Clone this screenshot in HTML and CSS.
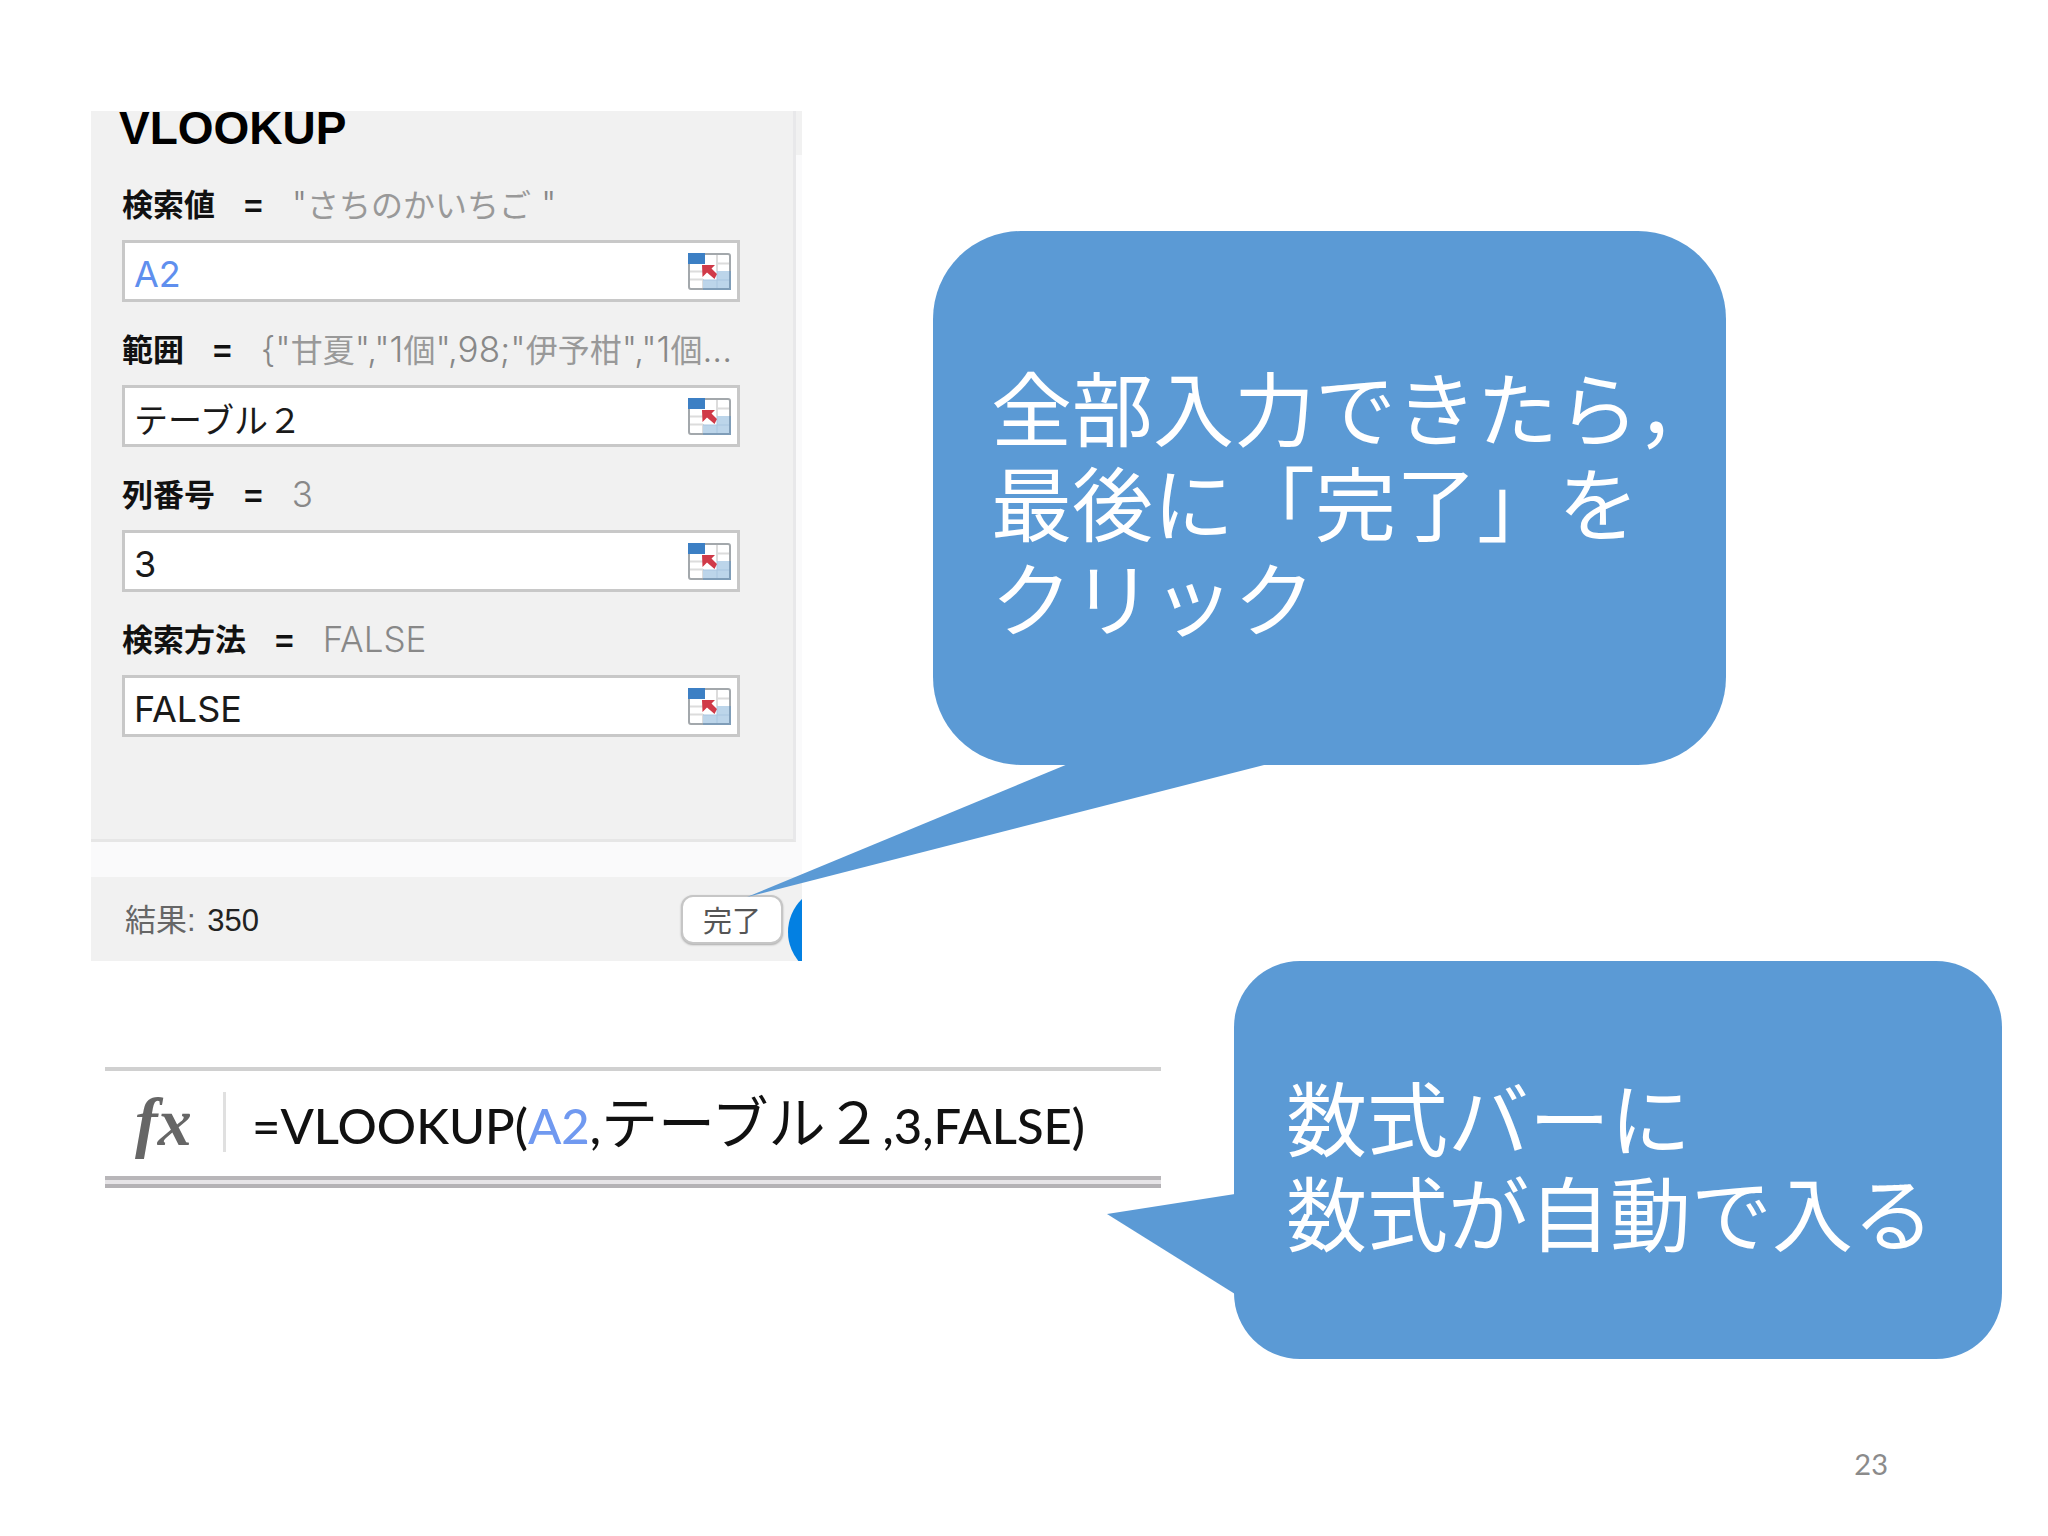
FILE: index.html
```html
<!DOCTYPE html>
<html lang="ja">
<head>
<meta charset="utf-8">
<meta name="viewport" content="width=device-width, initial-scale=1">
<title>VLOOKUP</title>
<link rel="stylesheet" href="styles.css">
</head>
<body>
<svg class="defs" width="0" height="0" aria-hidden="true">
  <symbol id="pick" viewBox="0 0 43 37">
    <rect x="1" y="1" width="41" height="35" rx="2" fill="#fff" stroke="#a3a8ac" stroke-width="2"/>
    <path d="M2 18.500H15M2 26.500H15M29 10.500H41M29 2V18M15 26V35" stroke="#dcdcdc" stroke-width="2" fill="none"/>
    <path d="M29 18H42V36H15V27H29Z" fill="#bcd5ea"/>
    <path d="M29 18V35M15 27H41" stroke="#a9c6e0" stroke-width="1" fill="none"/>
    <path d="M42 18V36H15" stroke="#7f9db8" stroke-width="2" fill="none"/>
    <rect width="17" height="11" fill="#3c7fc4"/>
    <path d="M14 12H27L23.500 15.500L29 21L26.500 26L19 19.500L14.500 24Z" fill="#d03a48"/>
  </symbol>
</svg>
<main class="slide">
  <section class="row row-dialog">
    <form class="panel">
      <div class="args">
        <h1 class="title">VLOOKUP</h1>
        <div class="field">
          <div class="caption"><label for="f1">検索値</label><b class="eq">=</b><span class="preview"><i>"</i>さちのかいちご<i> "</i></span></div>
          <div class="box"><input id="f1" class="ref" value="A2"><button type="button" class="pick" aria-label="検索値を選択"><svg><use href="#pick"/></svg></button></div>
        </div>
        <div class="field">
          <div class="caption"><label for="f2">範囲</label><b class="eq">=</b><span class="preview"><i>{"</i>甘夏<i>","1</i>個<i>",98;"</i>伊予柑<i>","1</i>個<i>...</i></span></div>
          <div class="box"><input id="f2" class="kana" value="テーブル２"><button type="button" class="pick" aria-label="範囲を選択"><svg><use href="#pick"/></svg></button></div>
        </div>
        <div class="field">
          <div class="caption"><label for="f3">列番号</label><b class="eq">=</b><span class="preview"><i>3</i></span></div>
          <div class="box"><input id="f3" value="3"><button type="button" class="pick" aria-label="列番号を選択"><svg><use href="#pick"/></svg></button></div>
        </div>
        <div class="field">
          <div class="caption"><label for="f4">検索方法</label><b class="eq">=</b><span class="preview"><i>FALSE</i></span></div>
          <div class="box"><input id="f4" value="FALSE"><button type="button" class="pick" aria-label="検索方法を選択"><svg><use href="#pick"/></svg></button></div>
        </div>
      </div>
      <div class="result">
        <p>結果: <output>350</output></p>
        <button type="button" class="done">完了</button>
        <span class="dot"></span>
      </div>
    </form>
    <div class="callout callout-done">
      <svg class="tail" viewBox="0 0 521 133" aria-hidden="true"><path d="M0 133L321 0H521Z"/></svg>
      <p>全部入力できたら，<br>最後に「完了」を<br>クリック</p>
    </div>
  </section>
  <section class="row row-formula">
    <div class="formula">
      <span class="fx">fx</span>
      <p class="code">=VLOOKUP(<span class="cell">A2</span>,<span class="name">テーブル２</span>,3,FALSE)</p>
    </div>
    <div class="callout callout-bar">
      <svg class="tail" viewBox="0 0 128 100" aria-hidden="true"><path d="M0 20L128 0V100Z"/></svg>
      <p>数式バーに<br>数式が自動で入る</p>
    </div>
  </section>
  <footer class="page">23</footer>
</main>
</body>
</html>
```
FILE: styles.css
```css
* { box-sizing: border-box; }

body {
  margin: 0;
  background: #fff;
  color: #111;
  font-family: "Liberation Sans", "Noto Sans CJK JP", sans-serif;
}

p, h1 { margin: 0; }

.defs { position: absolute; }

.slide { padding-top: 111px; overflow: hidden; }

.row { display: grid; align-items: start; }

.row-dialog { grid-template-columns: 91fr 711fr 131fr 793fr 322fr; }

.row-formula { grid-template-columns: 105fr 1056fr 73fr 768fr 46fr; }

/* Function arguments panel */
.panel {
  grid-column: 2;
  overflow: hidden;
  background: #fafafb;
}

.args {
  padding: 0 53px 102px 31px;
  border-right: 3px solid #e8e8ea;
  border-bottom: 3px solid #e6e6e6;
  margin-right: 6px;
  background: #f1f1f1;
  box-shadow: 6px -687px 0 #f1f1f1;
}

.title {
  margin: 0 0 37px -3px;
  font-size: 46px;
  line-height: 34px;
  color: #000;
}

.field + .field { margin-top: 25px; }

.caption {
  display: flex;
  gap: 29px;
  height: 46px;
  margin-bottom: 12px;
  font-size: 31px;
  line-height: 48px;
  white-space: nowrap;
}

.caption label { font-weight: 700; }

.eq { font-size: 32px; }

.preview {
  color: #999;
  font-weight: 400;
  font-size: 32px;
}

.preview i {
  font-style: normal;
  font-weight: 300;
  color: #888;
  font-family: Inter, sans-serif;
  font-size: 35px;
  line-height: 40px;
}

.box {
  display: flex;
  align-items: center;
  height: 62px;
  padding-right: 6px;
  border: 3px solid #c8c8c8;
  background: #fff;
}

.box input {
  flex: 1;
  min-width: 0;
  height: 56px;
  padding: 6px 0 0 9px;
  border: 0;
  background: none;
  color: #1a1a1a;
  font: 36px/48px Inter, "Noto Sans CJK JP", sans-serif;
}

.box .kana {
  padding-top: 4px;
  font-size: 34px;
}

.box .ref { color: #5f8fee; }

.pick {
  width: 43px;
  height: 37px;
  padding: 0;
  border: 0;
  background: none;
}

.pick svg { display: block; width: 43px; height: 37px; }

.result {
  position: relative;
  display: flex;
  justify-content: space-between;
  align-items: center;
  height: 84px;
  margin-top: 35px;
  padding: 0 19px 0 34px;
  background: #f1f1f1;
  color: #666;
  font-size: 31px;
}

.result p { padding-bottom: 4px; }

.result output { margin-left: 3px; color: #222; }

.done {
  width: 102px;
  height: 49px;
  padding: 0;
  border: 2px solid #c6c6c6;
  border-radius: 12px;
  background: #fff;
  box-shadow: 0 1px 2px #aaa;
  color: #555;
  font: 29px/40px "Noto Sans CJK JP", sans-serif;
}

.dot {
  position: absolute;
  top: 9px;
  right: -78px;
  width: 92px;
  height: 92px;
  border-radius: 50%;
  background: #0380e2;
}

/* Speech bubbles */
.callout {
  grid-column: 4;
  position: relative;
  display: flex;
  align-items: center;
  background: #5b9ad5;
  color: #fff;
  font: 81px/95px "Noto Sans CJK JP", sans-serif;
  white-space: nowrap;
}

.callout-done {
  height: 534px;
  margin-top: 120px;
  padding: 2px 0 0 58px;
  border-radius: 88px;
}

.callout-bar {
  height: 398px;
  padding: 4px 0 0 52px;
  border-radius: 66px;
}

.tail { position: absolute; fill: #5b9ad5; }

.callout-done .tail {
  top: 533px;
  right: 458px;
  width: 521px;
  height: 133px;
}

.callout-bar .tail {
  top: 233px;
  right: calc(100% - 1px);
  width: 128px;
  height: 100px;
}

/* Formula bar */
.formula {
  grid-column: 2;
  display: flex;
  align-items: center;
  height: 113px;
  margin-top: 106px;
  padding-bottom: 3px;
  border-top: 4px solid #d0d0d0;
  border-bottom: 4px solid #b8b6b9;
  box-shadow: 0 4px 0 #e6e4e7, 0 8px 0 #b4b2b5;
  white-space: nowrap;
}

.fx {
  width: 121px;
  padding-left: 30px;
  border-right: 3px solid #e0e0e0;
  color: #666;
  font: italic 700 68px/60px "Liberation Serif", serif;
}

.code {
  padding-left: 26px;
  color: #111;
  font: 500 49px/64px Lato, "Noto Sans CJK JP", sans-serif;
}

.code .cell { color: #7099f0; }

.code .name { font: 400 57px/64px "Noto Sans CJK JP", sans-serif; }

.page {
  margin-top: 85px;
  padding-right: 160px;
  color: #8b8b8b;
  font: 29px/40px Lato, sans-serif;
  text-align: right;
}
```
